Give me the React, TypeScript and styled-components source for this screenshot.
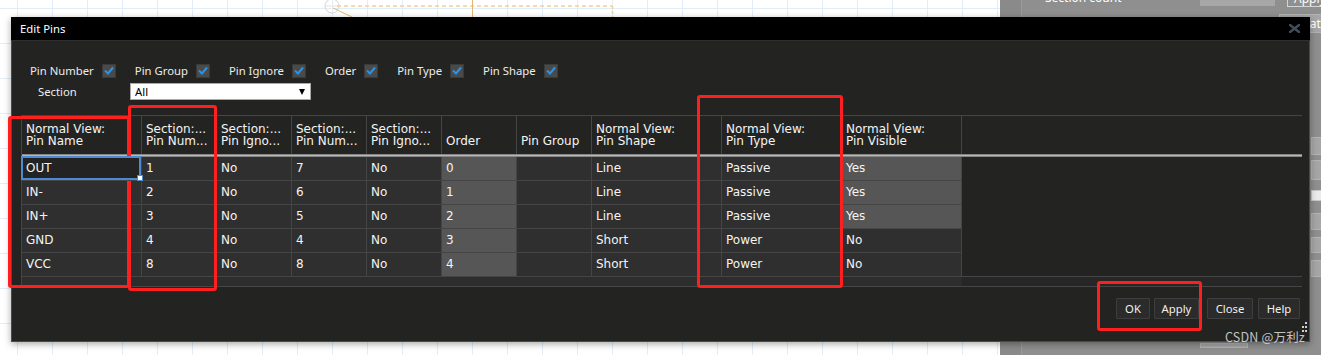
import React from 'react';
import styled, { createGlobalStyle } from 'styled-components';

const GlobalStyle = createGlobalStyle`
  html, body {
    margin: 0;
    padding: 0;
  }
  body {
    width: 1321px;
    height: 355px;
    overflow: hidden;
    background: #ffffff;
  }
  * {
    box-sizing: border-box;
  }
`;

const UI_FONT = `'Noto Sans', 'Open Sans', sans-serif`;
const GRID_FONT = `'DejaVu Sans', Verdana, sans-serif`;
const LINE = '#454545';

// ---------- backdrop (schematic canvas + property panel) ----------

const Desktop = styled.div`
  position: relative;
  width: 1321px;
  height: 355px;
  overflow: hidden;
  display: grid;
  grid-template-columns: 1000px 1fr;
  font-family: ${UI_FONT};
`;

const Canvas = styled.div`
  position: relative;
  background-color: #ffffff;
  background-image: linear-gradient(to right, #e1edf8 1px, transparent 1px),
    linear-gradient(to bottom, #e1edf8 1px, transparent 1px);
  background-size: 35px 35px;
  background-position: 17px 8px;
`;

const CanvasShapes = styled.svg`
  position: absolute;
  left: 0;
  top: 0;
`;

const SidePanel = styled.div`
  background: linear-gradient(to right, #8a8a8a 21px, #8f8f8f 21px);
  padding-left: 21px;
`;

const PanelBody = styled.div`
  height: 100%;
  border-left: 1px solid #9b9b9b;
  display: flex;
  flex-direction: column;
  align-items: flex-start;
`;

const CountRow = styled.div`
  display: flex;
  align-items: center;
  height: 14px;
  margin-top: -10px;
  padding-left: 23px;
  font-size: 12px;
  color: #ffffff;
  white-space: nowrap;
`;

const CountLabel = styled.span`
  width: 155px;
`;

const CountInput = styled.div`
  width: 75px;
  height: 12px;
  margin-top: 6px;
  background: #a7a7a7;
  margin-right: 12px;
`;

const CountButton = styled.div`
  width: 50px;
  height: 16px;
  margin-top: 4px;
  border: 1px solid #d4d4d4;
  padding-left: 6px;
  line-height: 14px;
`;

const PeekBox = styled.div<{ $x: number; $top: number; $h: number; $light?: boolean }>`
  flex: none;
  width: 48px;
  height: ${(p) => p.$h}px;
  margin-left: ${(p) => p.$x}px;
  margin-top: ${(p) => p.$top}px;
  background: ${(p) => (p.$light ? '#ececec' : '#a6a6a6')};
  border: 1px solid ${(p) => (p.$light ? '#c9c9c9' : '#b4b4b4')};
  font-size: 12px;
  color: #ffffff;
  line-height: 17px;
  white-space: nowrap;
`;

// ---------- dialog ----------

const Dialog = styled.div`
  position: absolute;
  left: 11px;
  top: 17px;
  width: 1299px;
  height: 325px;
  background: #232422;
  border: 1px solid #4a4a4a;
  border-top: none;
  box-shadow: 0 2px 7px rgba(0, 0, 0, 0.35);
  display: flex;
  flex-direction: column;
  color: #ececec;
`;

const TitleBar = styled.div`
  height: 24px;
  margin: 0 -1px;
  background: #000000;
  border-bottom: 1px solid #2f2f2f;
  display: flex;
  align-items: center;
  justify-content: space-between;
  padding: 0 10px 0 9px;
  font-size: 11.3px;
  color: #ffffff;
`;

const Body = styled.div`
  flex: 1;
  display: flex;
  flex-direction: column;
  padding: 22px 9px 0 9px;
`;

const OptionsRow = styled.div`
  display: flex;
  align-items: center;
  gap: 19px;
  height: 15px;
  margin-left: 9px;
  font-size: 11.3px;
`;

const Option = styled.label`
  display: flex;
  align-items: center;
  gap: 8px;
  white-space: nowrap;
`;

const CheckBox = styled.span`
  width: 14px;
  height: 14px;
  background: #4a4a4a;
  border: 1px solid #3a3a3a;
  display: flex;
  align-items: center;
  justify-content: center;
`;

const SectionRow = styled.div`
  display: flex;
  align-items: center;
  height: 17px;
  margin-top: 5px;
  padding-left: 17px;
  font-size: 11.3px;
`;

const SectionLabel = styled.span`
  width: 92px;
`;

const Select = styled.div`
  width: 181px;
  height: 17px;
  background: #ffffff;
  border: 1px solid #a9a9a9;
  padding: 0 5px 0 4px;
  display: flex;
  align-items: center;
  justify-content: space-between;
  color: #000000;
`;

const SelectArrow = styled.span`
  width: 0;
  height: 0;
  border-left: 3.5px solid transparent;
  border-right: 3.5px solid transparent;
  border-top: 6px solid #000000;
`;

const Grid = styled.div`
  margin-top: 15px;
  margin-right: -2px;
  display: grid;
  grid-template-columns: 120px 75px 75px 75px 75px 75px 75px 130px 120px 120px 1fr;
  border-left: 1px solid ${LINE};
  border-top: 1px solid ${LINE};
  font-family: ${GRID_FONT};
  font-size: 12px;
  color: #f4f4f4;
`;

const HeadCell = styled.div<{ $filler?: boolean }>`
  height: 38px;
  border-right: ${(p) => (p.$filler ? 'none' : `1px solid ${LINE}`)};
  padding: 0 4px 7px;
  display: flex;
  flex-direction: column;
  justify-content: flex-end;
  line-height: 12px;
  white-space: nowrap;
  overflow: hidden;
`;

const HeaderRule = styled.div`
  grid-column: 1 / -1;
  height: 3px;
  background: linear-gradient(#6c6c6c, #b8b8b8 50%, #6c6c6c);
`;

const BodyCell = styled.div<{ $shade?: boolean }>`
  position: relative;
  height: 24px;
  border-right: 1px solid ${LINE};
  border-bottom: 1px solid ${LINE};
  background: ${(p) => (p.$shade ? '#565656' : '#2f2f2f')};
  padding-left: 4px;
  line-height: 23px;
  white-space: nowrap;
`;

const ActiveCell = styled(BodyCell)`
  background: #232323;
  z-index: 1;

  &::after {
    content: '';
    position: absolute;
    top: -1px;
    left: -1px;
    right: 0;
    bottom: 0;
    border: 2px solid #4f8ad0;
  }
`;

const FillHandle = styled.span`
  position: absolute;
  right: -2px;
  bottom: -1px;
  width: 6px;
  height: 6px;
  background: #ffffff;
  border: 1px solid #4f8ad0;
  z-index: 2;
`;

const FillerCell = styled.div<{ $last?: boolean }>`
  height: 24px;
  border-bottom: ${(p) => (p.$last ? `1px solid ${LINE}` : 'none')};
`;

const ScrollStrip = styled.div<{ $rest?: boolean }>`
  grid-column: ${(p) => (p.$rest ? 'auto' : '1 / 11')};
  height: 10px;
  background: ${(p) => (p.$rest ? '#262626' : '#2d2d2d')};
  border-bottom: 1px solid ${LINE};
`;

const Footer = styled.div`
  margin-top: 11px;
  display: flex;
  justify-content: flex-end;
`;

const Button = styled.button<{ $w: number; $gap?: number }>`
  width: ${(p) => p.$w}px;
  height: 21px;
  margin-left: ${(p) => p.$gap ?? 0}px;
  padding: 0;
  background: #2a2b2a;
  border: 1px solid #3d3e3d;
  border-radius: 1px;
  color: #f0f0f0;
  font-family: ${UI_FONT};
  font-size: 11.3px;
  line-height: 19px;
`;

const Grip = styled.svg`
  position: absolute;
  right: 1px;
  bottom: 8px;
`;

// ---------- overlays ----------

const Annotation = styled.div<{ $x: number; $y: number; $w: number; $h: number }>`
  position: absolute;
  left: ${(p) => p.$x}px;
  top: ${(p) => p.$y}px;
  width: ${(p) => p.$w}px;
  height: ${(p) => p.$h}px;
  border: 3px solid #ff1f1f;
  border-radius: 3px;
  pointer-events: none;
`;

const Watermark = styled.div`
  position: absolute;
  right: 16px;
  top: 328px;
  line-height: 18px;
  font-family: 'Noto Sans CJK SC', 'Noto Sans', sans-serif;
  font-size: 12.5px;
  color: rgba(225, 225, 225, 0.85);
  letter-spacing: 0.2px;
`;

// ---------- data ----------

const options = ['Pin Number', 'Pin Group', 'Pin Ignore', 'Order', 'Pin Type', 'Pin Shape'];

const headers: string[][] = [
  ['Normal View:', 'Pin Name'],
  ['Section:...', 'Pin Num...'],
  ['Section:...', 'Pin Igno...'],
  ['Section:...', 'Pin Num...'],
  ['Section:...', 'Pin Igno...'],
  ['Order'],
  ['Pin Group'],
  ['Normal View:', 'Pin Shape'],
  ['Normal View:', 'Pin Type'],
  ['Normal View:', 'Pin Visible'],
];

const rows: string[][] = [
  ['OUT', '1', 'No', '7', 'No', '0', '', 'Line', 'Passive', 'Yes'],
  ['IN-', '2', 'No', '6', 'No', '1', '', 'Line', 'Passive', 'Yes'],
  ['IN+', '3', 'No', '5', 'No', '2', '', 'Line', 'Passive', 'Yes'],
  ['GND', '4', 'No', '4', 'No', '3', '', 'Short', 'Power', 'No'],
  ['VCC', '8', 'No', '8', 'No', '4', '', 'Short', 'Power', 'No'],
];

const annotations = [
  { x: 8, y: 116, w: 122, h: 172 },
  { x: 128, y: 105, w: 89, h: 186 },
  { x: 697, y: 95, w: 146, h: 193 },
  { x: 1097, y: 281, w: 105, h: 50 },
];

const peeks = [
  { x: 257, top: 10, h: 19, text: 'Format' },
  { x: 289, top: 104, h: 18 },
  { x: 289, top: 5, h: 20 },
  { x: 289, top: 10, h: 11, light: true },
  { x: 289, top: 12, h: 17 },
  { x: 289, top: 7, h: 16 },
  { x: 289, top: 7, h: 17 },
  { x: 178, top: 66, h: 5 },
];

function Check() {
  return (
    <svg width="10" height="9" viewBox="0 0 10 9">
      <polyline points="1,4.5 4,7.5 9,1.5" fill="none" stroke="#2196f3" strokeWidth="2" />
    </svg>
  );
}

export default function App() {
  return (
    <>
      <GlobalStyle />
      <Desktop>
        <Canvas>
          <CanvasShapes width="1000" height="20">
            <circle cx="332" cy="6" r="7" fill="none" stroke="#d6d6d6" strokeWidth="1" />
            <line x1="325" y1="6" x2="339" y2="6" stroke="#e2e2e2" />
            <line x1="337" y1="6" x2="612" y2="6" stroke="#f1d09c" strokeWidth="1.5" strokeDasharray="4 3" />
            <line x1="612.5" y1="6" x2="612.5" y2="17" stroke="#f1d09c" strokeWidth="1.5" strokeDasharray="3 2" />
            <line x1="472.5" y1="0" x2="472.5" y2="17" stroke="#e5b672" />
            <line x1="333" y1="8" x2="352" y2="17" stroke="#e5b672" />
          </CanvasShapes>
        </Canvas>
        <SidePanel>
          <PanelBody>
            <CountRow>
              <CountLabel>Section count</CountLabel>
              <CountInput />
              <CountButton>Apply</CountButton>
            </CountRow>
            {peeks.map((p, i) => (
              <PeekBox key={i} $x={p.x} $top={p.top} $h={p.h} $light={p.light}>
                {p.text}
              </PeekBox>
            ))}
          </PanelBody>
        </SidePanel>

        <Dialog>
          <TitleBar>
            <span>Edit Pins</span>
            <svg width="11" height="9" viewBox="0 0 11 9">
              <path d="M1 1 L10 8 M10 1 L1 8" stroke="#3f4e5d" strokeWidth="2.4" strokeLinecap="square" />
            </svg>
          </TitleBar>
          <Body>
            <OptionsRow>
              {options.map((o) => (
                <Option key={o}>
                  {o}
                  <CheckBox>
                    <Check />
                  </CheckBox>
                </Option>
              ))}
            </OptionsRow>
            <SectionRow>
              <SectionLabel>Section</SectionLabel>
              <Select>
                <span>All</span>
                <SelectArrow />
              </Select>
            </SectionRow>

            <Grid>
              {headers.map((h, i) => (
                <HeadCell key={i}>
                  {h.map((line) => (
                    <span key={line}>{line}</span>
                  ))}
                </HeadCell>
              ))}
              <HeadCell $filler />
              <HeaderRule />
              {rows.map((r, ri) => (
                <React.Fragment key={ri}>
                  {r.map((v, ci) =>
                    ri === 0 && ci === 0 ? (
                      <ActiveCell key={ci}>
                        {v}
                        <FillHandle />
                      </ActiveCell>
                    ) : (
                      <BodyCell key={ci} $shade={ci === 5 || (ci === 9 && v === 'Yes')}>
                        {v}
                      </BodyCell>
                    )
                  )}
                  <FillerCell $last={ri === rows.length - 1} />
                </React.Fragment>
              ))}
              <ScrollStrip />
              <ScrollStrip $rest />
            </Grid>

            <Footer>
              <Button $w={34}>OK</Button>
              <Button $w={45} $gap={4}>Apply</Button>
              <Button $w={46} $gap={8}>Close</Button>
              <Button $w={42} $gap={5}>Help</Button>
            </Footer>
          </Body>
          <Grip width="9" height="11" viewBox="0 0 9 11">
            <rect x="6" y="0" width="2" height="2" fill="#cfcfcf" />
            <rect x="3" y="4" width="2" height="2" fill="#cfcfcf" />
            <rect x="6" y="4" width="2" height="2" fill="#cfcfcf" />
            <rect x="3" y="8" width="2" height="2" fill="#cfcfcf" />
            <rect x="6" y="8" width="2" height="2" fill="#cfcfcf" />
          </Grip>
        </Dialog>

        {annotations.map((a, i) => (
          <Annotation key={i} $x={a.x} $y={a.y} $w={a.w} $h={a.h} />
        ))}
        <Watermark>CSDN @万利z</Watermark>
      </Desktop>
    </>
  );
}
